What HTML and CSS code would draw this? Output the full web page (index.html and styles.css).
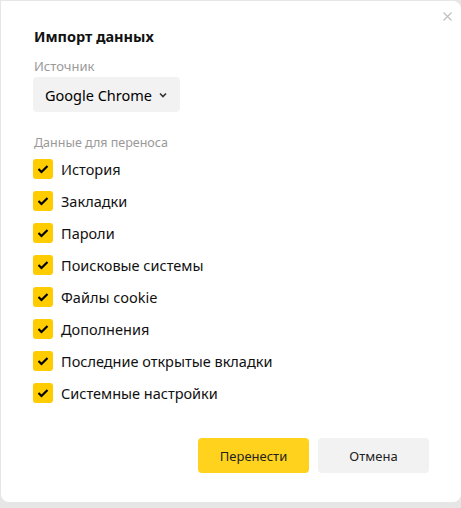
FILE: index.html
```html
<!DOCTYPE html>
<html lang="ru">
<head>
<meta charset="utf-8">
<link rel="stylesheet" href="styles.css">
</head>
<body>
<div class="dialog">
  <button class="close" aria-label="Закрыть">
    <svg width="9" height="9" viewBox="0 0 9 9"><path d="M0.5 0.5L8.5 8.5M8.5 0.5L0.5 8.5" stroke="#bdbdbd" stroke-width="1.1" fill="none"/></svg>
  </button>
  <h1 class="title">Импорт данных</h1>
  <div class="label">Источник</div>
  <div class="select">
    <span>Google Chrome</span>
    <svg class="chev" width="8" height="6" viewBox="0 0 8 6"><path d="M1 1.5L4 4.5L7 1.5" stroke="#333" stroke-width="1.6" fill="none"/></svg>
  </div>
  <div class="label label-data">Данные для переноса</div>
  <ul class="list">
    <li><span class="cb"><svg width="12" height="10" viewBox="0 0 12 10"><path d="M1.5 5L4.5 8L10.5 2" stroke="#000" stroke-width="2.2" fill="none"/></svg></span>История</li>
    <li><span class="cb"><svg width="12" height="10" viewBox="0 0 12 10"><path d="M1.5 5L4.5 8L10.5 2" stroke="#000" stroke-width="2.2" fill="none"/></svg></span>Закладки</li>
    <li><span class="cb"><svg width="12" height="10" viewBox="0 0 12 10"><path d="M1.5 5L4.5 8L10.5 2" stroke="#000" stroke-width="2.2" fill="none"/></svg></span>Пароли</li>
    <li><span class="cb"><svg width="12" height="10" viewBox="0 0 12 10"><path d="M1.5 5L4.5 8L10.5 2" stroke="#000" stroke-width="2.2" fill="none"/></svg></span>Поисковые системы</li>
    <li><span class="cb"><svg width="12" height="10" viewBox="0 0 12 10"><path d="M1.5 5L4.5 8L10.5 2" stroke="#000" stroke-width="2.2" fill="none"/></svg></span>Файлы cookie</li>
    <li><span class="cb"><svg width="12" height="10" viewBox="0 0 12 10"><path d="M1.5 5L4.5 8L10.5 2" stroke="#000" stroke-width="2.2" fill="none"/></svg></span>Дополнения</li>
    <li><span class="cb"><svg width="12" height="10" viewBox="0 0 12 10"><path d="M1.5 5L4.5 8L10.5 2" stroke="#000" stroke-width="2.2" fill="none"/></svg></span>Последние открытые вкладки</li>
    <li><span class="cb"><svg width="12" height="10" viewBox="0 0 12 10"><path d="M1.5 5L4.5 8L10.5 2" stroke="#000" stroke-width="2.2" fill="none"/></svg></span>Системные настройки</li>
  </ul>
  <div class="actions">
    <button class="btn btn-primary">Перенести</button>
    <button class="btn btn-secondary">Отмена</button>
  </div>
</div>
</body>
</html>
```
FILE: styles.css
```css
* { box-sizing: border-box; }
html, body { margin: 0; padding: 0; }
body {
  background: #e6e6e6;
  font-family: "Noto Sans", "Open Sans", sans-serif;
  color: #000;
  width: 461px;
  height: 508px;
  overflow: hidden;
}
.dialog {
  position: relative;
  margin: 1px 0 0 1px;
  width: 460px;
  height: 501px;
  background: #fff;
  border-radius: 0 8px 8px 8px;
  padding: 25px 32px 0 32px;
}
.close {
  position: absolute;
  top: 11px;
  right: 9px;
  width: 9px;
  height: 9px;
  padding: 0;
  border: 0;
  background: none;
  display: flex;
}
.title {
  margin: 0 0 0 1px;
  font-size: 14.5px;
  font-weight: 700;
  line-height: 20px;
  color: #111;
}
.label {
  margin: 12px 0 0 1px;
  font-size: 13px;
  line-height: 16px;
  color: #999;
}
.select {
  margin-top: 3px;
  width: 147px;
  height: 35px;
  background: #f2f2f2;
  border-radius: 4px;
  display: flex;
  align-items: center;
  padding: 0 13px 0 12px;
  justify-content: space-between;
  font-size: 14.5px;
  color: #000;
}
.chev { margin-top: 1px; }
.label-data { margin-top: 23px; font-size: 12.5px; }
.list {
  list-style: none;
  margin: 0;
  padding: 0;
  display: flex;
  flex-direction: column;
  gap: 12px;
  margin-top: 8px;
}
.list li {
  display: flex;
  align-items: center;
  gap: 8px;
  height: 20px;
  font-size: 14.5px;
  color: #111;
}
.cb {
  width: 20px;
  height: 20px;
  background: #ffcc00;
  border-radius: 3px;
  display: flex;
  align-items: center;
  justify-content: center;
}
.actions {
  display: flex;
  justify-content: flex-end;
  gap: 9px;
  margin-top: 35px;
}
.btn {
  width: 111px;
  height: 35px;
  border: 0;
  border-radius: 4px;
  font-family: inherit;
  font-size: 13px;
  color: #222;
}
.btn-primary { background: #ffd21e; }
.btn-secondary { background: #f2f2f2; }
```
